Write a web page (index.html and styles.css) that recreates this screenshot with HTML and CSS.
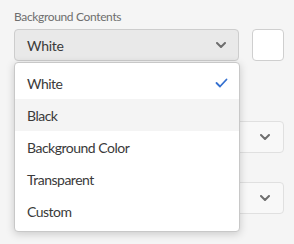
FILE: index.html
```html
<!DOCTYPE html>
<html>
<head>
<meta charset="utf-8">
<link rel="stylesheet" href="styles.css">
</head>
<body>
<div class="panel">
  <div class="field">
    <div class="label">Background Contents</div>
    <div class="row">
      <div class="picker open">
        <span class="value">White</span>
        <svg class="chev" width="10" height="6" viewBox="0 0 10 6"><path d="M1 1l4 4 4-4" fill="none" stroke="#6e6e6e" stroke-width="2" stroke-linecap="round" stroke-linejoin="round"/></svg>
      </div>
      <div class="swatch"></div>
    </div>
  </div>
  <div class="field f2">
    <div class="picker ghost">
      <svg class="chev" width="10" height="6" viewBox="0 0 10 6"><path d="M1 1l4 4 4-4" fill="none" stroke="#6e6e6e" stroke-width="2" stroke-linecap="round" stroke-linejoin="round"/></svg>
    </div>
  </div>
  <div class="field f3">
    <div class="picker ghost">
      <svg class="chev" width="10" height="6" viewBox="0 0 10 6"><path d="M1 1l4 4 4-4" fill="none" stroke="#6e6e6e" stroke-width="2" stroke-linecap="round" stroke-linejoin="round"/></svg>
    </div>
  </div>

  <ul class="menu">
    <li class="item">White
      <svg class="check" width="13" height="10" viewBox="0 0 13 10"><path d="M1.5 5l3.5 3.5 6.5-7" fill="none" stroke="#3470d0" stroke-width="1.8" stroke-linecap="round" stroke-linejoin="round"/></svg>
    </li>
    <li class="item hover">Black</li>
    <li class="item">Background Color</li>
    <li class="item">Transparent</li>
    <li class="item">Custom</li>
  </ul>
</div>
</body>
</html>
```
FILE: styles.css
```css
* { box-sizing: border-box; }
html, body { margin: 0; padding: 0; }
body {
  background: #f5f5f5;
  font-family: Lato, "Open Sans", sans-serif;
  width: 294px;
  height: 244px;
  overflow: hidden;
}
.panel {
  position: relative;
  padding: 9px 10px 0 14px;
}
.label {
  font-size: 12px;
  line-height: 16px;
  color: #6e6e6e;
  letter-spacing: -0.35px;
  margin-bottom: 4px;
}
.row {
  display: flex;
  gap: 13px;
}
.picker {
  flex: 1;
  height: 32px;
  border: 1px solid #d0d0d0;
  border-radius: 4px;
  display: flex;
  align-items: center;
  padding: 0 12px 0 12px;
}
.picker.open {
  background: #e9e9e9;
  border-color: #cdcdcd;
}
.picker.ghost {
  background: #f8f8f8;
  border-color: #e0e0e0;
  justify-content: flex-end;
  padding-right: 13px;
}
.value {
  font-size: 14px;
  color: #3a3a3a;
  letter-spacing: -0.3px;
  flex: 1;
}
.chev { display: block; }
.swatch {
  width: 32px;
  height: 32px;
  background: #fff;
  border: 1px solid #cfcfcf;
  border-radius: 4px;
}
.f2 { margin-top: 60px; }
.f3 { margin-top: 29px; }
.menu {
  position: absolute;
  left: 14px;
  top: 62px;
  width: 226px;
  margin: 0;
  padding: 4px 0;
  list-style: none;
  background: #fff;
  border: 1px solid #c8c8c8;
  border-radius: 4px;
  box-shadow: 0 2px 8px rgba(0,0,0,0.18);
}
.item {
  height: 32px;
  display: flex;
  align-items: center;
  justify-content: space-between;
  padding: 0 11px 0 12px;
  font-size: 14px;
  letter-spacing: -0.5px;
  color: #3a3a3a;
}
.item.hover { background: #f4f4f4; }
.check { display: block; }
```
